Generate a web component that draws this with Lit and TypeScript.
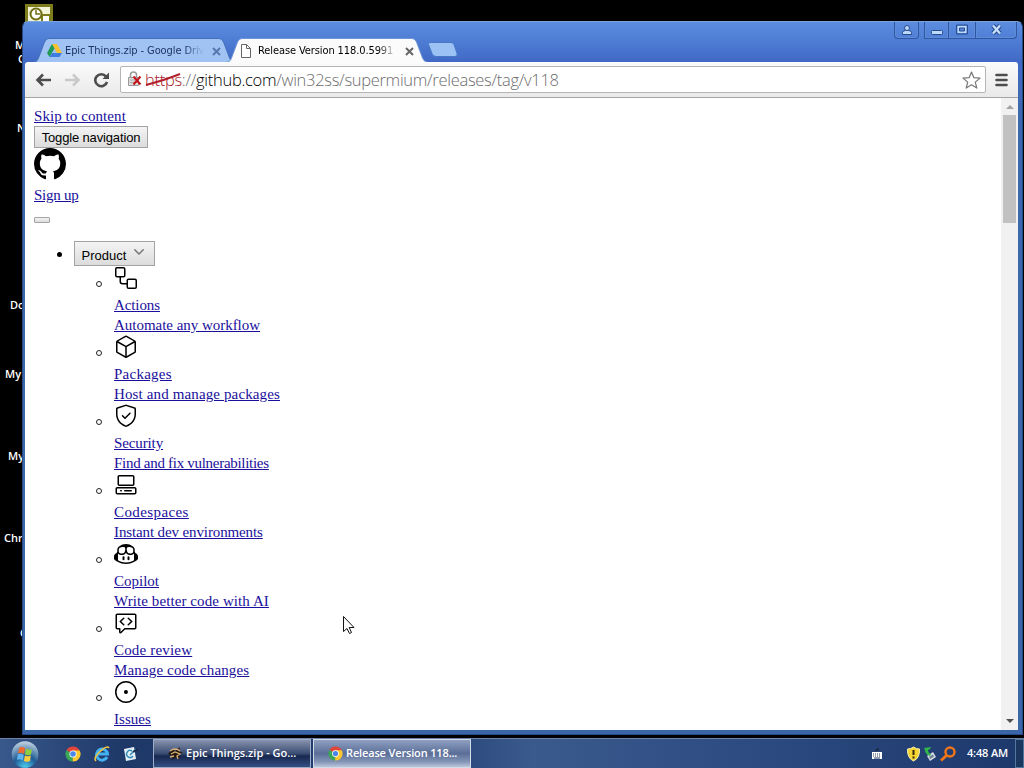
import { css, html, LitElement, svg } from "lit";
import { customElement, property } from "lit/decorators.js";

const icons: Record<string, string> = {
  github:
    "M8 0c4.42 0 8 3.58 8 8a8.013 8.013 0 0 1-5.45 7.59c-.4.08-.55-.17-.55-.38 0-.27.01-1.13.01-2.2 0-.75-.25-1.23-.54-1.48 1.78-.2 3.65-.88 3.65-3.95 0-.88-.31-1.59-.82-2.15.08-.2.36-1.02-.08-2.12 0 0-.67-.22-2.2.82-.64-.18-1.32-.27-2-.27-.68 0-1.36.09-2 .27-1.53-1.03-2.2-.82-2.2-.82-.44 1.1-.16 1.92-.08 2.12-.51.56-.82 1.28-.82 2.15 0 3.06 1.86 3.75 3.64 3.95-.23.2-.44.55-.51 1.07-.46.21-1.61.55-2.33-.66-.15-.24-.6-.83-1.23-.82-.67.01-.27.38.01.53.34.19.73.9.82 1.13.16.45.68 1.31 2.69.94 0 .67.01 1.3.01 1.49 0 .21-.15.45-.55.38A7.995 7.995 0 0 1 0 8c0-4.42 3.58-8 8-8Z",
  workflow:
    "M1 3a2 2 0 0 1 2-2h6.5a2 2 0 0 1 2 2v6.5a2 2 0 0 1-2 2H7v4.063C7 16.355 7.644 17 8.438 17H12.5v-2.5a2 2 0 0 1 2-2H21a2 2 0 0 1 2 2V21a2 2 0 0 1-2 2h-6.5a2 2 0 0 1-2-2v-2.5H8.437A2.939 2.939 0 0 1 5.5 15.562V11.5H3a2 2 0 0 1-2-2Zm2-.5a.5.5 0 0 0-.5.5v6.5a.5.5 0 0 0 .5.5h6.5a.5.5 0 0 0 .5-.5V3a.5.5 0 0 0-.5-.5ZM14.5 14a.5.5 0 0 0-.5.5V21a.5.5 0 0 0 .5.5H21a.5.5 0 0 0 .5-.5v-6.5a.5.5 0 0 0-.5-.5Z",
  package:
    "M12.876.64V.639l8.25 4.763c.541.313.875.89.875 1.515v9.525a1.75 1.75 0 0 1-.875 1.516l-8.25 4.762a1.748 1.748 0 0 1-1.75 0l-8.25-4.763a1.75 1.75 0 0 1-.875-1.515V6.917c0-.625.334-1.202.875-1.515L11.126.64a1.748 1.748 0 0 1 1.75 0Zm-1 1.298L4.251 6.34l7.75 4.474 7.75-4.474-7.625-4.402a.248.248 0 0 0-.25 0Zm.875 19.123 7.625-4.402a.25.25 0 0 0 .125-.216V7.639l-7.75 4.474ZM3.501 7.64v8.803c0 .09.048.172.125.216l7.625 4.402v-8.947Z",
  shield:
    "M16.53 9.78a.75.75 0 0 0-1.06-1.06L11 13.19l-1.97-1.97a.75.75 0 0 0-1.06 1.06l2.5 2.5a.75.75 0 0 0 1.06 0l5-5ZM12.54.637l8.25 2.675A1.75 1.75 0 0 1 22 4.976V10c0 6.19-3.771 10.704-9.401 12.83a1.704 1.704 0 0 1-1.198 0C5.77 20.705 2 16.19 2 10V4.976c0-.758.489-1.43 1.21-1.664L11.46.637a1.748 1.748 0 0 1 1.08 0Zm-.617 1.426-8.25 2.676a.249.249 0 0 0-.173.237V10c0 5.46 3.28 9.483 8.43 11.426a.199.199 0 0 0 .14 0C17.22 19.483 20.5 15.461 20.5 10V4.976a.25.25 0 0 0-.173-.237l-8.25-2.676a.253.253 0 0 0-.154 0Z",
  codespaces:
    "M3.5 3.75C3.5 2.784 4.284 2 5.25 2h13.5c.966 0 1.75.784 1.75 1.75v7.5A1.75 1.75 0 0 1 18.75 13H5.25a1.75 1.75 0 0 1-1.75-1.75Zm-2 12c0-.966.784-1.75 1.75-1.75h17.5c.966 0 1.75.784 1.75 1.75v4a1.75 1.75 0 0 1-1.75 1.75H3.25a1.75 1.75 0 0 1-1.75-1.75ZM5.25 3.5a.25.25 0 0 0-.25.25v7.5c0 .138.112.25.25.25h13.5a.25.25 0 0 0 .25-.25v-7.5a.25.25 0 0 0-.25-.25Zm-2 12a.25.25 0 0 0-.25.25v4c0 .138.112.25.25.25h17.5a.25.25 0 0 0 .25-.25v-4a.25.25 0 0 0-.25-.25ZM10 17.75a.75.75 0 0 1 .75-.75h6.5a.75.75 0 0 1 0 1.5h-6.5a.75.75 0 0 1-.75-.75Zm-4 0a.75.75 0 0 1 .75-.75h.5a.75.75 0 0 1 0 1.5h-.5a.75.75 0 0 1-.75-.75Z",
  copilot:
    "M23.922 16.992c-.861 1.495-5.859 5.023-11.922 5.023-6.063 0-11.061-3.528-11.922-5.023A.641.641 0 0 1 0 16.736v-2.869a.841.841 0 0 1 .053-.22c.372-.935 1.347-2.292 2.605-2.656.167-.429.414-1.055.644-1.517a10.195 10.195 0 0 1-.052-1.086c0-1.331.282-2.499 1.132-3.368.397-.406.89-.717 1.474-.952 1.399-1.136 3.392-2.093 6.122-2.093 2.731 0 4.767.957 6.166 2.093.584.235 1.077.546 1.474.952.85.869 1.132 2.037 1.132 3.368 0 .368-.014.733-.052 1.086.23.462.477 1.088.644 1.517 1.258.364 2.233 1.721 2.605 2.656a.832.832 0 0 1 .053.22v2.869a.641.641 0 0 1-.078.256ZM12.172 11h-.344a4.323 4.323 0 0 1-.355.508C10.703 12.455 9.555 13 7.965 13c-1.725 0-2.989-.359-3.782-1.259a2.005 2.005 0 0 1-.085-.104L4 11.741v6.585c1.435.779 4.514 2.179 8 2.179 3.486 0 6.565-1.4 8-2.179v-6.585l-.098-.104s-.033.045-.085.104c-.793.9-2.057 1.259-3.782 1.259-1.59 0-2.738-.545-3.508-1.492a4.323 4.323 0 0 1-.355-.508Zm.641-2.935c.136 1.057.403 1.913.878 2.497.442.544 1.134.938 2.344.938 1.573 0 2.292-.337 2.657-.751.384-.435.558-1.15.558-2.361 0-1.14-.243-1.847-.705-2.319-.477-.488-1.319-.862-2.824-1.025-1.487-.161-2.192.138-2.533.529-.269.307-.437.808-.438 1.578v.021c0 .265.021.562.063.893Zm-1.626 0c.042-.331.063-.628.063-.894v-.02c-.001-.77-.169-1.271-.438-1.578-.341-.391-1.046-.69-2.533-.529-1.505.163-2.347.537-2.824 1.025-.462.472-.705 1.179-.705 2.319 0 1.211.175 1.926.558 2.361.365.414 1.084.751 2.657.751 1.21 0 1.902-.394 2.344-.938.475-.584.742-1.44.878-2.497ZM14.5 14.25a1 1 0 0 1 1 1v2a1 1 0 0 1-2 0v-2a1 1 0 0 1 1-1Zm-5 0a1 1 0 0 1 1 1v2a1 1 0 0 1-2 0v-2a1 1 0 0 1 1-1Z",
  review:
    "M10.3 6.74a.75.75 0 0 1-.04 1.06l-2.908 2.7 2.908 2.7a.75.75 0 1 1-1.02 1.1l-3.5-3.25a.75.75 0 0 1 0-1.1l3.5-3.25a.75.75 0 0 1 1.06.04Zm3.44 1.06a.75.75 0 1 1 1.02-1.1l3.5 3.25a.75.75 0 0 1 0 1.1l-3.5 3.25a.75.75 0 1 1-1.02-1.1l2.908-2.7-2.908-2.7ZM1.5 4.25c0-.966.784-1.75 1.75-1.75h17.5c.966 0 1.75.784 1.75 1.75v12.5a1.75 1.75 0 0 1-1.75 1.75h-9.69l-3.573 3.573A1.458 1.458 0 0 1 5 21.043V18.5H3.25a1.75 1.75 0 0 1-1.75-1.75ZM3.25 4a.25.25 0 0 0-.25.25v12.5c0 .138.112.25.25.25h2.5a.75.75 0 0 1 .75.75v3.19l3.72-3.72a.749.749 0 0 1 .53-.22h10a.25.25 0 0 0 .25-.25V4.25a.25.25 0 0 0-.25-.25Z",
  issue:
    "M12 1c6.075 0 11 4.925 11 11s-4.925 11-11 11S1 18.075 1 12 5.925 1 12 1ZM2.5 12a9.5 9.5 0 0 0 9.5 9.5 9.5 9.5 0 0 0 9.5-9.5A9.5 9.5 0 0 0 12 2.5 9.5 9.5 0 0 0 2.5 12Zm9.5 2a2 2 0 1 1-.001-3.999A2 2 0 0 1 12 14Z",
  chevron:
    "M12.78 5.22a.749.749 0 0 1 0 1.06l-4.25 4.25a.749.749 0 0 1-1.06 0L3.22 6.28a.749.749 0 1 1 1.06-1.06L8 8.939l3.72-3.719a.749.749 0 0 1 1.06 0Z",
};

// tracking: letter spacing in px of the name and of the text
const products = [
  { icon: "workflow", name: "Actions", text: "Automate any workflow", tracking: [-0.1, -0.03] },
  { icon: "package", name: "Packages", text: "Host and manage packages", tracking: [0.25, 0.13] },
  { icon: "shield", name: "Security", text: "Find and fix vulnerabilities", tracking: [-0.12, -0.29] },
  { icon: "codespaces", name: "Codespaces", text: "Instant dev environments", tracking: [0.4, -0.12] },
  { icon: "copilot", name: "Copilot", text: "Write better code with AI", tracking: [0, 0.09] },
  { icon: "review", name: "Code review", text: "Manage code changes", tracking: [0.18, 0.15] },
  { icon: "issue", name: "Issues", text: "", tracking: [0.05, 0] },
];

// Shortcut labels on the desktop, most of each is under the window
const shortcuts = [
  { x: 15, y: 38, label: "My" },
  { x: 18, y: 52, label: "Computer" },
  { x: 17, y: 121, label: "Network" },
  { x: 10, y: 298, label: "Documents" },
  { x: 5, y: 367, label: "My Pictures" },
  { x: 8, y: 449, label: "My Music" },
  { x: 4, y: 531, label: "Chrome" },
  { x: 20, y: 626, label: "Ged" },
];

const chromeLogo = svg`
  <path d="M8 8 1.5 4.2A7.5 7.5 0 0 1 14.6 4.4Z" fill="#e2443a" />
  <path d="M8 8 7.6 15.5A7.5 7.5 0 0 1 1.4 4.3Z" fill="#3aa757" />
  <path d="M8 8 8 4.4 14.6 4.4A7.5 7.5 0 0 1 7.6 15.5Z" fill="#fbc92f" />
  <circle cx="8" cy="8" r="3.6" fill="#fff" />
  <circle cx="8" cy="8" r="2.8" fill="#4a86e8" />
`;

@customElement("chrome-tab")
export class ChromeTab extends LitElement {
  static styles = css`
    :host {
      display: grid;
      width: 202px;
      height: 24px;
      margin-right: -9px;
      font: 11px/24px "DejaVu Sans Condensed", "DejaVu Sans", sans-serif;
      letter-spacing: -0.1px;
      color: #1f3563;
    }
    :host([active]) {
      z-index: 1;
      color: #000;
    }
    .shape,
    .content {
      grid-area: 1 / 1;
    }
    .shape {
      fill: #a0c3f4;
      stroke: #4470b9;
    }
    :host([active]) .shape {
      fill: #fbfbfb;
      stroke: #6d94d4;
    }
    .content {
      display: flex;
      align-items: center;
      padding: 1px 10px 0 14px;
    }
    .title {
      width: 139px;
      margin-left: 3px;
      overflow: hidden;
      white-space: nowrap;
      mask-image: linear-gradient(90deg, #000 86%, transparent);
    }
    .close {
      margin-left: 8px;
      stroke: #5678ad;
      stroke-width: 2;
    }
    :host([active]) .close {
      stroke: #666;
    }
  `;

  @property({ type: Boolean, reflect: true }) active = false;
  @property() label = "";

  render() {
    return html`
      <svg class="shape" width="202" height="24">
        <path
          d="M.5 24C4 24 4.5 22 5.500 20L11.500 4Q13 .5 16 .5H186Q189 .5 190.500 4L196.500 20Q198 24 201.500 24"
        />
      </svg>
      <div class="content">
        <slot></slot>
        <span class="title">${this.label}</span>
        <svg class="close" width="9" height="9"><path d="m1 1 7 7m0-7-7 7" /></svg>
      </div>
    `;
  }
}

@customElement("app-root")
export class AppRoot extends LitElement {
  static styles = css`
    * {
      box-sizing: border-box;
    }
    :host {
      display: flex;
      flex-direction: column;
      justify-content: flex-end;
      position: relative;
      width: 1024px;
      height: 768px;
      overflow: hidden;
      background: #000;
    }
    svg {
      display: block;
      flex: none;
    }

    .shortcut {
      position: absolute;
      font: 600 11px/13px "Open Sans", sans-serif;
      white-space: nowrap;
      color: #fff;
    }
    .clock-icon {
      position: absolute;
      left: 25px;
      top: 4px;
    }

    .window {
      position: absolute;
      left: 22px;
      top: 21px;
      width: 1001px;
      height: 714px;
      display: flex;
      flex-direction: column;
      padding: 0 4px 4px 2px;
      border: 1px solid #284b86;
      border-top-color: #7da2dc;
      border-radius: 6px 6px 0 0;
      background: linear-gradient(#5b8de0, #4069c6 40px, #3e68ad 90px, #3a65a8);
    }
    .titlebar {
      display: flex;
      height: 40px;
      padding-left: 8px;
    }
    .tabs {
      display: flex;
      align-items: flex-end;
      flex: 1;
    }
    .new-tab {
      margin: 0 0 4px 8px;
    }
    .controls {
      display: flex;
      height: 17px;
      margin-right: 1px;
    }
    .control {
      display: flex;
      justify-content: center;
      align-items: center;
      width: 25px;
      border: 1px solid #2f56a0;
      border-top: 0;
      box-shadow: inset 0 0 0 1px #5f8cd8;
    }
    .user {
      margin-right: 5px;
      border-radius: 0 0 4px 4px;
    }
    .max {
      width: 26px;
      border-width: 0 0 1px;
    }
    .exit {
      width: 42px;
      border-radius: 0 0 4px;
    }

    .toolbar {
      display: flex;
      align-items: center;
      height: 36px;
      padding: 0 10px;
      border-bottom: 1px solid #a5a5a5;
      border-radius: 3px 3px 0 0;
      background: linear-gradient(#fbfbfb, #e9e9e9);
    }
    .nav {
      display: flex;
      gap: 12px;
      margin-right: 10px;
    }
    .omnibox {
      display: flex;
      align-items: center;
      flex: 1;
      height: 27px;
      margin-right: 9px;
      padding: 0 4px 0 6px;
      border: 1px solid #b5b5b5;
      border-radius: 2px;
      background: #fff;
    }
    .url {
      flex: 1;
      margin-left: 2px;
      font: 300 16.500px/24px "Open Sans", sans-serif;
      letter-spacing: -0.3px;
      white-space: nowrap;
      color: #6c6c6c;
    }
    .scheme {
      display: inline-grid;
      color: #a3202a;
    }
    .scheme > * {
      grid-area: 1 / 1;
    }
    .host {
      color: #000;
    }

    .viewport {
      display: flex;
      flex: 1;
      min-height: 0;
      background: #fff;
    }
    .page {
      flex: 1;
      min-width: 0;
      padding: 8px 8px 0 9px;
      overflow: hidden;
      font: 15px/20px "Liberation Serif", serif;
      color: #000;
    }
    .line {
      height: 20px;
    }
    .link {
      color: #1a0f9c;
      text-decoration: underline;
    }
    .skip {
      letter-spacing: 0.07px;
    }
    .sign-up {
      letter-spacing: -0.25px;
    }
    .button {
      display: flex;
      align-items: center;
      justify-content: center;
      width: 114px;
      height: 22px;
      padding-top: 1px;
      border: 1px solid #a3a3a3;
      background: linear-gradient(#f4f4f4, #dcdcdc);
      font: 13px/16px "Liberation Sans", sans-serif;
      letter-spacing: -0.15px;
    }
    .logo {
      margin-bottom: 5px;
    }
    .empty {
      width: 16px;
      height: 6px;
      margin: 12px 0 18px;
      border-radius: 1px;
    }
    .menu {
      display: grid;
      grid-template-columns: 40px 1fr;
    }
    .bullet {
      width: 5px;
      height: 5px;
      margin: 11px 0 0 23px;
      border-radius: 50%;
      background: #000;
    }
    .product {
      gap: 5px;
      width: 81px;
      height: 25px;
      padding: 4px 0 0;
      letter-spacing: 0;
    }
    .chevron {
      margin-top: -7px;
      fill: #777;
    }
    .items {
      margin: 0;
      padding: 0;
      list-style: none;
    }
    .item {
      display: grid;
      grid-template-columns: 40px 1fr;
      height: 69px;
    }
    .ring {
      width: 6px;
      height: 6px;
      margin: 15px 0 0 22px;
      border: 1px solid #222;
      border-radius: 50%;
    }
    .item-icon {
      margin-bottom: 5px;
    }

    .scrollbar {
      display: flex;
      flex-direction: column;
      align-items: center;
      width: 17px;
      background: #f1f1f1;
    }
    .thumb {
      width: 13px;
      height: 108px;
      margin-bottom: auto;
      background: #c1c1c1;
    }

    .cursor {
      position: absolute;
      left: 343px;
      top: 616px;
    }

    .taskbar {
      display: flex;
      height: 30px;
      border-top: 1px solid #6d83a8;
      background: linear-gradient(90deg, #39588b, #1e3868 12%, #233f72 40%, #3a598c 52%, #2c4a80 75%, #1d386b);
      font: 600 11px/28px "Open Sans", sans-serif;
      color: #fff;
    }
    .quick {
      display: flex;
      align-items: center;
      gap: 13px;
      width: 153px;
      padding-left: 11px;
    }
    .orb {
      margin-right: 13px;
    }
    .task {
      display: flex;
      align-items: center;
      gap: 3px;
      width: 158px;
      margin-right: 2px;
      padding: 0 0 1px 14px;
      border: 1px solid #9eacc6;
      background: linear-gradient(#8793ad, #3b4c73 50%, #17284f 60%, #344f84);
      white-space: nowrap;
    }
    .task.current {
      background: linear-gradient(#8fa0c0, #5a6e98 50%, #8394b4 80%, #b9c6db);
      border-color: #d3dbe8;
      letter-spacing: -0.15px;
    }
    .tray {
      display: flex;
      align-items: center;
      margin-left: auto;
    }
    .keyboard {
      margin-right: 23px;
    }
    .time {
      margin: -1px 7px 0 11px;
      letter-spacing: -0.15px;
    }
    .peek {
      width: 9px;
      height: 29px;
      border: 1px solid #53779b;
      background: #1b365f;
    }
  `;

  private icon(name: string, size: number, className: string, box = 24) {
    return html`
      <svg class=${className} width=${size} height=${size} viewBox="0 0 ${box} ${box}">
        <path d=${icons[name]} />
      </svg>
    `;
  }

  private renderTitlebar() {
    return html`
      <div class="titlebar">
        <div class="tabs">
          <chrome-tab label="Epic Things.zip - Google Drive">
            <svg width="15" height="14" viewBox="0 0 15 14">
              <path d="M5 0h5l5 9h-5Z" fill="#fbc02d" />
              <path d="M5 0 0 9l2.500 4L7.500 4.500Z" fill="#219a55" />
              <path d="M5 9h10l-2.500 4h-10Z" fill="#3d7de0" />
            </svg>
          </chrome-tab>
          <chrome-tab active label="Release Version 118.0.5991">
            <svg width="15" height="14" fill="#fff" stroke="#666">
              <path d="M1.500.5h5l4 4v9h-9Zm5 0v4h4" />
            </svg>
          </chrome-tab>
          <svg class="new-tab" width="31" height="17">
            <path
              d="M3 1.500h21q2 0 3 2l3 9q1 3-2 3H9q-3 0-4-3L1.500 3.500Q1 1.500 3 1.500Z"
              fill="#9cc2f5"
              stroke="#4777c5"
            />
          </svg>
        </div>
        <div class="controls">
          <div class="control user">
            <svg width="12" height="12" fill="#bcd8fb" stroke="#284c8e">
              <path d="M1.500 10.500V8.500Q2 6.500 4.500 6.500h3Q10 6.500 10.500 8.500v2Z" />
              <circle cx="6" cy="4" r="2.500" />
            </svg>
          </div>
          <div class="control">
            <svg width="12" height="12" fill="#bcd8fb" stroke="#284c8e">
              <rect x=".5" y="6.500" width="11" height="4" rx="1" />
            </svg>
          </div>
          <div class="control max">
            <svg width="12" height="12" fill="none" stroke="#284c8e">
              <path d="M2.500 3h7v5h-7Z" stroke="#bcd8fb" stroke-width="2" />
              <path d="M.5 1h11v9H.5ZM3.500 4h5v3h-5Z" />
            </svg>
          </div>
          <div class="control exit">
            <svg width="13" height="12" fill="none">
              <path d="m3 1.500 7 8m0-8-7 8" stroke="#284c8e" stroke-width="4.500" />
              <path d="m3 1.500 7 8m0-8-7 8" stroke="#c6defc" stroke-width="2.400" />
            </svg>
          </div>
        </div>
      </div>
    `;
  }

  private renderToolbar() {
    return html`
      <div class="toolbar">
        <div class="nav">
          <svg width="17" height="16" fill="none" stroke="#4d4d4d" stroke-width="2.600">
            <path d="M16 8H3M8 2.500 2.500 8 8 13.500" />
          </svg>
          <svg width="17" height="16" fill="none" stroke="#c9c9c9" stroke-width="2.600">
            <path d="M1 8h13M9 2.500 14.500 8 9 13.500" />
          </svg>
          <svg width="17" height="16" fill="none" stroke="#4d4d4d" stroke-width="2.600">
            <path d="M13 4.500A6 6 0 1 0 14 10" />
            <path d="M16 .5V7H9.500Z" fill="#4d4d4d" stroke="none" />
          </svg>
        </div>
        <div class="omnibox">
          <svg width="16" height="17" fill="none">
            <path d="M3.500 7V4a3 3 0 0 1 6 0v3" stroke="#999" stroke-width="1.500" />
            <path d="M1.500 6.500h10v8h-10Z" fill="#ddd" stroke="#999" />
            <path d="M3 9h7m-7 2.500h7" stroke="#aaa" />
            <path d="m6.500 5.500 7 8m0-8-7 8" stroke="#c4141c" stroke-width="2" />
          </svg>
          <div class="url">
            <span class="scheme"
              ><span>https</span
              ><svg width="36" height="24" fill="none" stroke="#b3222c" stroke-width="2">
                <path d="M1 17Q20 12 35 6" /></svg></span
            >://<span class="host">github.com</span>/win32ss/supermium/releases/tag/v118
          </div>
          <svg width="19" height="18" fill="#fff" stroke="#777" stroke-width="1.200">
            <path
              d="m9.500 1 2.400 5.700 6.100.4-4.700 4 1.500 6-5.300-3.300-5.300 3.300 1.500-6-4.700-4 6.100-.4Z"
              stroke-linejoin="round"
            />
          </svg>
        </div>
        <svg width="13" height="14" stroke="#4d4d4d" stroke-width="2.600" stroke-linecap="round">
          <path d="M1.500 2h10m-10 5h10m-10 5h10" />
        </svg>
      </div>
    `;
  }

  private renderPage() {
    return html`
      <div class="page">
        <div class="line"><a class="link skip">Skip to content</a></div>
        <div class="button">Toggle navigation</div>
        ${this.icon("github", 32, "logo", 16)}
        <div class="line"><a class="link sign-up">Sign up</a></div>
        <div class="button empty"></div>
        <div class="menu">
          <div class="bullet"></div>
          <div>
            <div class="button product">Product ${this.icon("chevron", 16, "chevron", 16)}</div>
            <ul class="items">
              ${products.map(
                ({ icon, name, text, tracking }) => html`
                  <li class="item">
                    <div class="ring"></div>
                    <div>
                      ${this.icon(icon, 24, "item-icon")}
                      <div class="line">
                        <a class="link" style="letter-spacing: ${tracking[0]}px">${name}</a>
                      </div>
                      <div class="line">
                        <a class="link" style="letter-spacing: ${tracking[1]}px">${text}</a>
                      </div>
                    </div>
                  </li>
                `
              )}
            </ul>
          </div>
        </div>
      </div>
    `;
  }

  private renderTaskbar() {
    return html`
      <div class="taskbar">
        <div class="quick">
          <svg class="orb" width="28" height="28" viewBox="0 0 28 28">
            <defs>
              <radialGradient id="orb" cx=".5" cy="1" r="1">
                <stop offset="0" stop-color="#4fd3f5" />
                <stop offset=".45" stop-color="#1f5c94" />
                <stop offset="1" stop-color="#c5d5e4" />
              </radialGradient>
            </defs>
            <circle cx="14" cy="14.500" r="13.300" fill="url(#orb)" />
            <path d="M8 8q3-2 6 0l-1 6q-3-2-6-.5Z" fill="#ef6a32" />
            <path d="M15 8.500q3 2 6 .5l-1 5.500q-3 1.500-6 0Z" fill="#8fce3e" />
            <path d="M6.800 14.500q3-1.500 6 .5l-1 5.500q-3-2-6-.5Z" fill="#62b4ef" />
            <path d="M13.800 15.500q3 1.500 6 0L19 21q-3 1.500-6 0Z" fill="#fccc3c" />
          </svg>
          <svg width="16" height="16">${chromeLogo}</svg>
          <svg width="16" height="16" fill="none">
            <path d="M13 11A5.500 5.500 0 1 1 13.500 8H4" stroke="#43b2f2" stroke-width="3" />
            <path d="M2 15Q-1 12 6 5.500T15 2" stroke="#f3c63d" stroke-width="1.500" />
          </svg>
          <svg width="16" height="16">
            <path d="M1 3 11 1l2 12-10 2Z" fill="#e4f2f8" />
            <path d="M9 5a3.500 3.500 0 1 0 1 5M7 9l6-6" fill="none" stroke="#338bb5" stroke-width="1.500" />
            <path d="m10 6 5-3" stroke="#1c2c48" stroke-width="2" />
          </svg>
        </div>
        <div class="task">
          <svg width="15" height="15">
            <path d="M0 8 4 3l3 2 5-4-1 4 4 2-4 1 1 5-4-2-4 3 1-4Z" fill="#24190f" />
            <path d="M2 5Q7 1 12 5M3 8l4-2 5 2-3 2 1 3M2 11l4-1" fill="none" stroke="#d8b078" stroke-width="1.300" />
          </svg>
          <span>Epic Things.zip - Go...</span>
        </div>
        <div class="task current">
          <svg width="15" height="15" viewBox="0 0 16 16">${chromeLogo}</svg>
          <span>Release Version 118...</span>
        </div>
        <div class="tray">
          <svg class="keyboard" width="12" height="12">
            <path d="M5 3q0-2 3-2" fill="none" stroke="#111" />
            <path d="M1 4h10v7H1Z" fill="#fff" />
            <path d="M2 6h8M2 8h8" stroke="#26395e" stroke-dasharray="1 1" />
            <path d="M3 10h6" stroke="#26395e" />
          </svg>
          <svg width="15" height="16">
            <path d="M7.500 1Q10 3 13.500 3 14 12 7.500 15 1 12 1.500 3 5 3 7.500 1Z" fill="#f6d532" stroke="#f5edb2" />
            <path d="M7.500 4v5m0 1.500v2" stroke="#33270a" stroke-width="2" />
          </svg>
          <svg width="19" height="16">
            <path d="m6 10 6-4 3 5-6 4Z" fill="#d5dbe2" />
            <path d="m8 11 4-2.500 1 2-4 2.500Z" fill="#6f7f96" />
            <path d="m3 2 7-1-1 2-2 1q0 3 3 4l-1 2Q4 8 4 4Z" fill="#31b84b" />
          </svg>
          <svg width="16" height="16" fill="none" stroke="#f07519">
            <circle cx="10" cy="6" r="4.500" stroke-width="2.500" />
            <path d="m7 9-6 5.500" stroke-width="3" />
          </svg>
          <span class="time">4:48 AM</span>
          <div class="peek"></div>
        </div>
      </div>
    `;
  }

  render() {
    return html`
      ${shortcuts.map(
        ({ x, y, label }) =>
          html`<div class="shortcut" style="left: ${x}px; top: ${y}px">${label}</div>`
      )}
      <svg class="clock-icon" width="28" height="19">
        <path d="M0 0h28v19H0Z" fill="#7d7d1c" />
        <path d="M3 3h22v16H3Z" fill="#f4f4d8" />
        <path d="M17 11h8v8h-8Z" fill="#fff" stroke="#7d7d1c" stroke-width="2" />
        <circle cx="11" cy="10" r="5.500" fill="#fff" stroke="#6f6f14" stroke-width="2" />
        <path d="M11 6v4h4" fill="none" stroke="#6f6f14" stroke-width="1.500" />
      </svg>
      <div class="window">
        ${this.renderTitlebar()} ${this.renderToolbar()}
        <div class="viewport">
          ${this.renderPage()}
          <div class="scrollbar">
            <svg width="17" height="17"><path d="m5 11 4-4 4 4Z" fill="#a3a3a3" /></svg>
            <div class="thumb"></div>
            <svg width="17" height="17"><path d="m5 6 4 4 4-4Z" fill="#505050" /></svg>
          </div>
        </div>
      </div>
      <svg class="cursor" width="13" height="19">
        <path d="M.5.5v15l3.500-3 2.500 5 2-1-2.300-5H11Z" fill="#fff" stroke="#111" />
      </svg>
      ${this.renderTaskbar()}
    `;
  }
}
